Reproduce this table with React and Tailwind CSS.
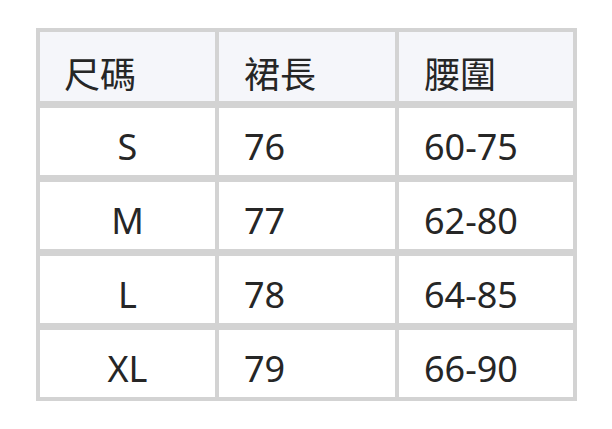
const rows = [
  ["S", "76", "60-75"],
  ["M", "77", "62-80"],
  ["L", "78", "64-85"],
  ["XL", "79", "66-90"],
];

export default function App() {
  return (
    <div
      className="w-[612px] h-[429px] bg-white pt-[28px] pl-[36px]"
      style={{ fontFamily: '"Noto Sans", "Noto Sans CJK TC", sans-serif' }}
    >
      <div className="w-[541px] bg-[#d3d3d3] p-[4px] grid grid-cols-[175px_176px_174px] gap-x-[4px] gap-y-[7px] text-[36px] text-[#262626] leading-none">
        <div className="h-[69px] bg-[#f5f6fa] flex items-center pl-[24px] pt-[16px]">尺碼</div>
        <div className="h-[69px] bg-[#f5f6fa] flex items-center pl-[25px] pt-[16px]">裙長</div>
        <div className="h-[69px] bg-[#f5f6fa] flex items-center pl-[25px] pt-[16px]">腰圍</div>
        {rows.map((r) => (
          <>
            <div key={r[0] + "a"} className="h-[67px] bg-white flex items-center justify-center pt-[10px]">{r[0]}</div>
            <div key={r[0] + "b"} className="h-[67px] bg-white flex items-center pl-[25px] pt-[10px]">{r[1]}</div>
            <div key={r[0] + "c"} className="h-[67px] bg-white flex items-center pl-[25px] pt-[10px]">{r[2]}</div>
          </>
        ))}
      </div>
    </div>
  );
}
